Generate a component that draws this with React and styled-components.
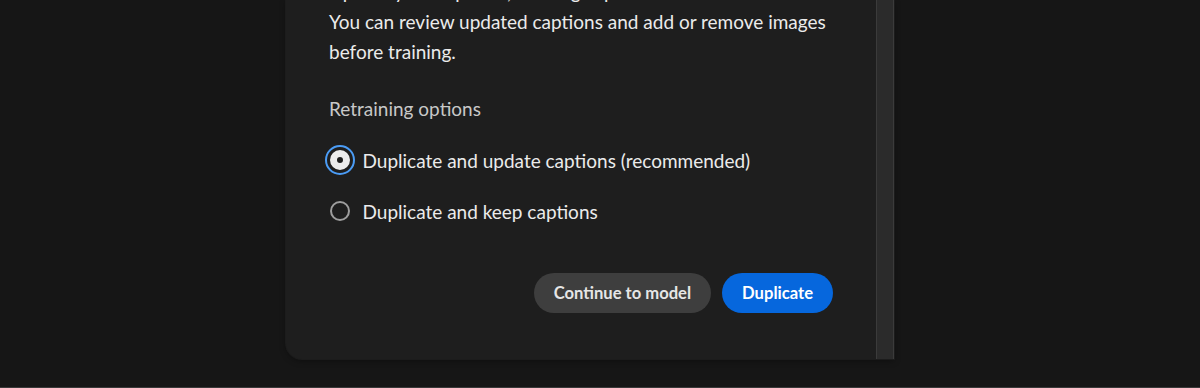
import React, {useState} from 'react';
import styled, {createGlobalStyle} from 'styled-components';

const GlobalStyle = createGlobalStyle`
    html, body {
        margin: 0;
        padding: 0;
        background-color: #161616;
    }

    body {
        font-family: Lato, 'Noto Sans', sans-serif;
        -webkit-font-smoothing: antialiased;
    }
`;

const Page = styled.div`
    height: 388px;
    overflow: hidden;
    display: flex;
    flex-direction: column;
    background-color: #161616;
    border-bottom: 1px solid #3a3a3a;
    box-sizing: border-box;
`;

const Dialog = styled.div`
    display: flex;
    margin-left: 286px;
    width: 608px;
    height: 359px;
    background-color: #1e1e1e;
    border-bottom-left-radius: 16px;
    box-shadow: 0 0 0 1px #1c1c1c, 0 2px 6px rgba(0, 0, 0, 0.35);
`;

const Content = styled.div`
    flex: 1;
    display: flex;
    flex-direction: column;
    padding: 0 43px 46px;
    color: #ebebeb;
`;

const Body = styled.p`
    margin: -23px 0 0;
    font-size: 19px;
    line-height: 30px;
    white-space: nowrap;
    color: #ebebeb;
`;

const SectionLabel = styled.div`
    margin-top: 27px;
    font-size: 19px;
    line-height: 30px;
    color: #c8c8c8;
`;

const RadioGroup = styled.div`
    display: flex;
    flex-direction: column;
    gap: 21px;
    margin-top: 21px;
`;

const RadioRow = styled.label`
    display: flex;
    align-items: center;
    gap: 13px;
    height: 30px;
    font-size: 19px;
    color: #ebebeb;
    cursor: pointer;
`;

const RadioMark = styled.span`
    position: relative;
    flex: none;
    width: 20px;
    height: 20px;
    margin-left: 0.5px;
    border-radius: 50%;
    box-sizing: border-box;
    border: ${props => props.checked ? '7px solid #ececec' : '2px solid #9e9e9e'};
    background-color: ${props => props.checked ? '#1e1e1e' : 'transparent'};

    &::after {
        content: '';
        display: ${props => props.checked ? 'block' : 'none'};
        position: absolute;
        inset: -12px;
        border-radius: 50%;
        border: 2.5px solid #4b9cf5;
    }
`;

const Actions = styled.div`
    display: flex;
    justify-content: flex-end;
    gap: 11px;
    margin-top: auto;
`;

const Button = styled.button`
    height: 40px;
    padding: 0 20px;
    border: none;
    border-radius: 20px;
    font-family: Lato, 'Noto Sans', sans-serif;
    font-size: 16.6px;
    font-weight: 700;
    color: ${props => props.primary ? '#ffffff' : '#e6e6e6'};
    background-color: ${props => props.primary ? '#0667dd' : '#3e3e3e'};
    cursor: pointer;
`;

const Scrollbar = styled.div`
    width: 16px;
    flex: none;
    background-color: #2b2b2b;
    border-left: 1px solid #3b3b3b;
    border-right: 1px solid #3b3b3b;
`;

const options = [
    {id: 'update', label: 'Duplicate and update captions (recommended)'},
    {id: 'keep', label: 'Duplicate and keep captions'}
];

export default function App() {
    const [choice, setChoice] = useState('update');

    return (
        <Page>
            <GlobalStyle />
            <Dialog>
                <Content>
                    <Body>
                        Update your captions, existing captions will be overwritten.
                        <br />
                        You can review updated captions and add or remove images
                        <br />
                        before training.
                    </Body>

                    <SectionLabel>Retraining options</SectionLabel>

                    <RadioGroup>
                        {options.map(option => (
                            <RadioRow key={option.id} onClick={() => setChoice(option.id)}>
                                <RadioMark checked={choice === option.id} />
                                {option.label}
                            </RadioRow>
                        ))}
                    </RadioGroup>

                    <Actions>
                        <Button>Continue to model</Button>
                        <Button primary>Duplicate</Button>
                    </Actions>
                </Content>
                <Scrollbar />
            </Dialog>
        </Page>
    );
}
